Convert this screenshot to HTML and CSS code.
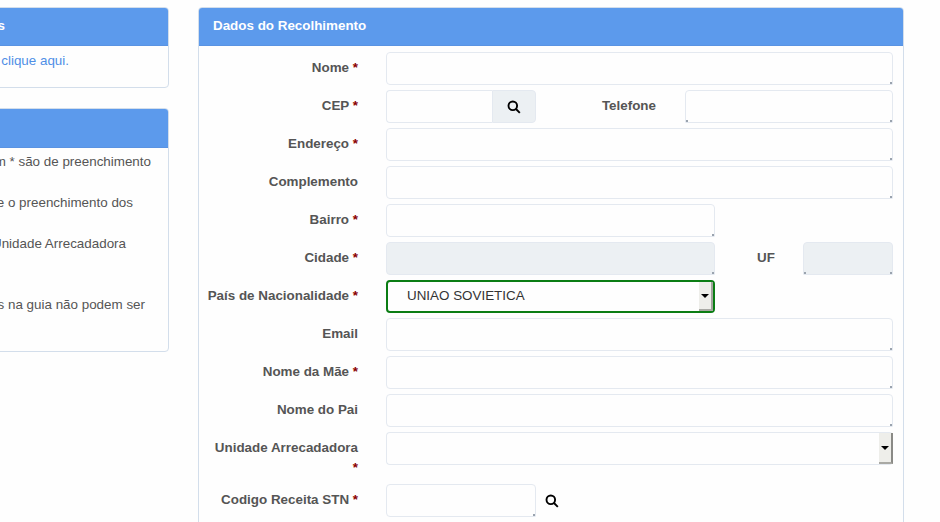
FILE: index.html
```html
<!DOCTYPE html>
<html lang="pt">
<head>
<meta charset="utf-8">
<title>Dados do Recolhimento</title>
<link rel="stylesheet" href="styles.css">
</head>
<body>
<div class="page">
  <aside class="sidebar">
    <section class="panel">
      <header class="panel-head end">Informações</header>
      <div class="panel-body link-body"><a href="#" class="link">clique aqui.</a></div>
    </section>
    <section class="panel">
      <header class="panel-head tall"></header>
      <div class="panel-body notes">
        <p class="note note-1">m * são de preenchimento</p>
        <p class="note note-2">e o preenchimento dos</p>
        <p class="note note-3">Unidade Arrecadadora</p>
        <p class="note note-4">s na guia não podem ser</p>
      </div>
    </section>
  </aside>
  <main class="panel main-panel">
    <header class="panel-head title">Dados do Recolhimento</header>
    <form class="form">
      <div class="row"><label class="label">Nome <b class="req">*</b></label><input class="input grow"></div>
      <div class="row">
        <label class="label">CEP <b class="req">*</b></label>
        <div class="group"><input class="input group-input">
          <span class="addon"><svg class="search" viewBox="0 0 14 14"><circle cx="5.8" cy="5.8" r="4.3"/><path d="M9 9l3.8 3.8"/></svg></span>
        </div>
        <label class="inline-label tel">Telefone</label><input class="input grow left-grip">
      </div>
      <div class="row"><label class="label">Endereço <b class="req">*</b></label><input class="input grow"></div>
      <div class="row"><label class="label">Complemento</label><input class="input grow"></div>
      <div class="row"><label class="label">Bairro <b class="req">*</b></label><input class="input mid"></div>
      <div class="row">
        <label class="label">Cidade <b class="req">*</b></label><input class="input mid off" disabled>
        <label class="inline-label uf">UF</label><input class="input grow off left-grip" disabled>
      </div>
      <div class="row">
        <label class="label">País de Nacionalidade <b class="req">*</b></label>
        <div class="select mid focus"><select class="native"><option>UNIAO SOVIETICA</option></select><span class="arrow"><i class="tri"></i></span></div>
      </div>
      <div class="row"><label class="label">Email</label><input class="input grow"></div>
      <div class="row"><label class="label">Nome da Mãe <b class="req">*</b></label><input class="input grow"></div>
      <div class="row"><label class="label">Nome do Pai</label><input class="input grow"></div>
      <div class="row">
        <label class="label two-line">Unidade Arrecadadora <b class="req">*</b></label>
        <div class="select grow plain"><select class="native"><option></option></select><span class="arrow"><i class="tri"></i></span></div>
      </div>
      <div class="row">
        <label class="label">Codigo Receita STN <b class="req">*</b></label><input class="input small">
        <svg class="search loose" viewBox="0 0 14 14"><circle cx="5.8" cy="5.8" r="4.3"/><path d="M9 9l3.8 3.8"/></svg>
      </div>
    </form>
  </main>
</div>
</body>
</html>
```
FILE: styles.css
```css
* { box-sizing: border-box; }
html, body { margin: 0; height: 522px; overflow: hidden; background: #fefefe; }
body { font: 13.4px/20px "Liberation Sans", Arial, sans-serif; color: #555; }
.page { display: flex; align-items: flex-start; gap: 29px; margin-left: -131px; padding-top: 7px; }
.sidebar { width: 300px; flex: none; display: flex; flex-direction: column; gap: 20px; }
.panel { border: 1px solid #d3deeb; border-radius: 4px; background: #fefefe; overflow: hidden; }
.panel-head { height: 39px; margin: -1px -1px 0; padding: 0 15px; background: #5c9aec; border-bottom: 1px solid #5a93e2; color: #fff; font-weight: 700; line-height: 38px; }
.panel-head.end { text-align: right; padding-right: 164px; }
.panel-head.tall { height: 40px; }
.link-body { height: 41px; padding: 5px 99px 0 0; text-align: right; }
.link { color: #4f8fe6; text-decoration: none; }
.notes { height: 203px; padding-top: 4px; }
.note { margin: 0; text-align: right; white-space: nowrap; }
.note-1 { padding-right: 17px; margin-bottom: 21px; }
.note-2 { padding-right: 35px; margin-bottom: 21px; }
.note-3 { padding-right: 42px; margin-bottom: 41px; }
.note-4 { padding-right: 23px; }
.main-panel { width: 706px; height: 600px; flex: none; }
.form { padding: 6px 10px 0 8px; display: flex; flex-direction: column; gap: 5px; }
.row { display: flex; align-items: flex-start; }
.label { width: 151px; margin-right: 28px; flex: none; padding-top: 6px; text-align: right; font-weight: 700; }
.two-line { padding-bottom: 1px; }
.req { color: #8b0000; }
.input { height: 33px; padding: 0 12px; border: 1px solid #e4e9f0; border-radius: 4px 4px 1px 4px; background: linear-gradient(#9aa3ae, #9aa3ae) right bottom / 2px 2px no-repeat #fefefe; font: inherit; outline: 0; }
.left-grip { border-radius: 4px 4px 1px 1px; background-image: linear-gradient(#9aa3ae, #9aa3ae), linear-gradient(#9aa3ae, #9aa3ae); background-position: right bottom, left bottom; background-size: 2px 2px, 2px 2px; background-repeat: no-repeat; }
.grow { flex: 1; min-width: 0; }
.mid { width: 329px; flex: none; }
.small { width: 150px; flex: none; }
.input.off { background-color: #ecf0f3; }
.group { width: 150px; flex: none; display: flex; }
.input.group-input { flex: 1; min-width: 0; border-right: 0; border-radius: 4px 0 0 4px; background: #fefefe; }
.addon { width: 44px; height: 33px; display: flex; align-items: center; justify-content: center; background: #ecf0f3; border: 1px solid #e4e9f0; border-radius: 0 4px 4px 0; }
.search { width: 14px; height: 14px; fill: none; stroke: #000; stroke-width: 1.9; }
.loose { margin: 10px 0 0 9px; }
.inline-label { flex: none; padding-top: 6px; font-weight: 700; }
.tel { width: 149px; padding-right: 29px; text-align: right; }
.uf { width: 88px; padding-left: 42px; }
.select { height: 33px; display: flex; background: #fefefe; border-radius: 4px; }
.plain { border: 1px solid #e4e9f0; border-right: 0; }
.focus { border: 2px solid #0b7d14; }
.native { flex: 1; min-width: 0; height: 100%; padding: 0 0 2px 19px; border: 0; outline: 0; appearance: none; background: transparent; font: inherit; color: #333; }
.arrow { width: 14px; height: 100%; display: flex; align-items: center; justify-content: center; background: #eeeeea; border-right: 2px solid #8a8a86; border-bottom: 2px solid #a9a9a4; }
.focus .arrow { border-right-color: #a3a39e; }
.tri { width: 0; height: 0; border: 4px solid transparent; border-top: 4px solid #000; border-bottom: 0; }
```
